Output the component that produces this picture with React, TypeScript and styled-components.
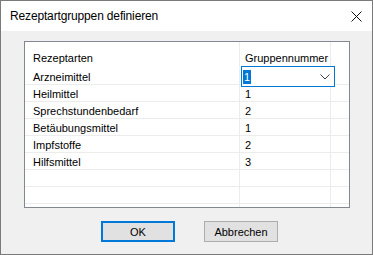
import React from 'react';
import styled, { createGlobalStyle } from 'styled-components';

const GlobalStyle = createGlobalStyle`
  html, body {
    margin: 0;
    padding: 0;
    background: #ffffff;
  }
  * {
    box-sizing: border-box;
  }
`;

const Window = styled.div`
  width: 373px;
  height: 255px;
  border: 1px solid #7a7a7a;
  display: flex;
  flex-direction: column;
  font-family: "Liberation Sans", Arial, sans-serif;
  font-size: 11px;
  color: #000;
`;

const TitleBar = styled.div`
  height: 30px;
  flex: none;
  background: #fff;
  display: flex;
  align-items: center;
  justify-content: space-between;
  padding: 0 10px 0 9px;
`;

const Title = styled.span`
  font-size: 12px;
  line-height: 30px;
  letter-spacing: -0.15px;
`;

const CloseIcon = styled.svg`
  width: 11px;
  height: 11px;
  display: block;
`;

const Body = styled.div`
  flex: 1;
  background: #f0f0f0;
  padding: 10px 0 0 23px;
  display: flex;
  flex-direction: column;
`;

const GridFrame = styled.div`
  position: relative;
  width: 326px;
  height: 167px;
  border: 1px solid #828790;
  background: #fff;
  overflow: hidden;
`;

const Row = styled.div<{ header?: boolean }>`
  display: grid;
  grid-template-columns: 214px 91px 1fr;
  height: ${({ header }) => (header ? '26px' : '17px')};
  border-bottom: 1px solid ${({ header }) => (header ? '#fff' : '#ececec')};
`;

const Cell = styled.div<{ header?: boolean }>`
  padding: ${({ header }) => (header ? '9px 0 0 8px' : '2px 0 0 8px')};
  line-height: 14px;
  white-space: nowrap;
  overflow: hidden;
  & + & {
    border-left: 1px solid ${({ header }) => (header ? '#e3e3e3' : '#ececec')};
    padding-left: ${({ header }) => (header ? '5px' : '5px')};
  }
`;

const Editor = styled.div`
  position: absolute;
  left: 216px;
  top: 24px;
  width: 94px;
  height: 21px;
  border: 1px solid #0078d7;
  background: #fff;
  display: flex;
  align-items: center;
  justify-content: space-between;
  padding: 0 4px 0 1px;
`;

const Selected = styled.span`
  background: #0078d7;
  color: #fff;
  line-height: 14px;
  padding: 0 1px 0 1px;
`;

const Chevron = styled.svg`
  width: 10px;
  height: 6px;
  display: block;
  margin-top: 1px;
`;

const ButtonRow = styled.div`
  display: flex;
  gap: 29px;
  margin: 13px 0 0 77px;
`;

const Button = styled.button<{ primary?: boolean }>`
  width: 74px;
  height: 21px;
  background: #e1e1e1;
  border: ${({ primary }) => (primary ? '2px solid #0078d7' : '1px solid #adadad')};
  font-family: "Liberation Sans", Arial, sans-serif;
  font-size: 11px;
  color: #000;
  padding: 0;
  line-height: 14px;
`;

const rows: [string, string][] = [
  ['Arzneimittel', '1'],
  ['Heilmittel', '1'],
  ['Sprechstundenbedarf', '2'],
  ['Betäubungsmittel', '1'],
  ['Impfstoffe', '2'],
  ['Hilfsmittel', '3'],
  ['', ''],
  ['', ''],
  ['', ''],
];

export default function App() {
  return (
    <>
      <GlobalStyle />
      <Window>
        <TitleBar>
          <Title>Rezeptartgruppen definieren</Title>
          <CloseIcon viewBox="0 0 11 11">
            <path d="M0.5 0.5 L10.5 10.5 M10.5 0.5 L0.5 10.5" stroke="#111" strokeWidth="1" fill="none" />
          </CloseIcon>
        </TitleBar>
        <Body>
          <GridFrame>
            <Row header>
              <Cell header>Rezeptarten</Cell>
              <Cell header>Gruppennummer</Cell>
              <Cell header />
            </Row>
            {rows.map(([name, group], i) => (
              <Row key={i}>
                <Cell>{name}</Cell>
                <Cell>{group}</Cell>
                <Cell />
              </Row>
            ))}
            <Editor>
              <Selected>1</Selected>
              <Chevron viewBox="0 0 10 6">
                <path d="M0.5 0.5 L5 5 L9.5 0.5" stroke="#444" strokeWidth="1" fill="none" />
              </Chevron>
            </Editor>
          </GridFrame>
          <ButtonRow>
            <Button primary>OK</Button>
            <Button>Abbrechen</Button>
          </ButtonRow>
        </Body>
      </Window>
    </>
  );
}
